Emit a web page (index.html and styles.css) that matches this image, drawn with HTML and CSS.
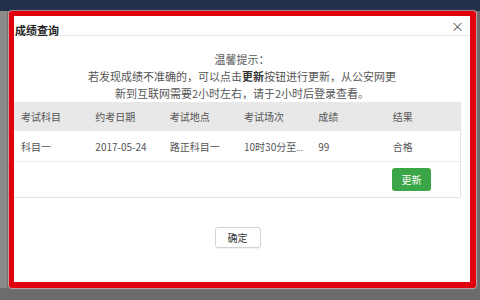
FILE: index.html
```html
<!DOCTYPE html>
<html lang="zh">
<head>
<meta charset="utf-8">
<link rel="stylesheet" href="styles.css">
</head>
<body>
<div class="topbar"></div>
<div class="stage">
  <div class="modal">
    <div class="modal-title">
      <span class="title-text">成绩查询</span>
      <span class="close">×</span>
    </div>
    <div class="notice">
      <p>温馨提示：</p>
      <p>若发现成绩不准确的，可以点击<b>更新</b>按钮进行更新，从公安网更</p>
      <p>新到互联网需要2小时左右，请于2小时后登录查看。</p>
    </div>
    <div class="panel">
      <table class="grid">
        <thead>
          <tr><th>考试科目</th><th>约考日期</th><th>考试地点</th><th>考试场次</th><th>成绩</th><th>结果</th></tr>
        </thead>
        <tbody>
          <tr><td>科目一</td><td>2017-05-24</td><td>路正科目一</td><td>10时30分至<span class="dots">...</span></td><td>99</td><td>合格</td></tr>
        </tbody>
      </table>
      <div class="actions"><button class="btn-update">更新</button></div>
    </div>
    <div class="footer"><button class="btn-ok">确定</button></div>
  </div>
</div>
</body>
</html>
```

FILE: styles.css
```css
html, body {
  margin: 0;
  padding: 0;
}
body {
  width: 480px;
  height: 300px;
  overflow: hidden;
  background: #6c6c6c;
  font-family: "Noto Sans CJK SC", "Noto Sans", sans-serif;
}
.topbar {
  height: 11px;
  background: #22304a;
}
.stage {
  padding: 0 4px 0 9px;
  background: linear-gradient(to right, #8a8a8a 0, #8a8a8a 7px, #6c6c6c 7px);
}
.modal {
  border-style: solid;
  border-color: #e1000d;
  border-width: 5px 6px 6px 5px;
  border-radius: 3px;
  background: #fff;
  height: 266px;
  box-shadow: 0 0 1px 1px rgba(255, 200, 200, 0.6);
}
.modal-title {
  display: flex;
  justify-content: space-between;
  align-items: flex-start;
  height: 19px;
  padding: 0 6px 0 1px;
  border-bottom: 1px solid #e6e6e6;
  font-size: 11px;
  font-weight: bold;
  color: #222;
}
.title-text {
  margin-top: 7px;
  line-height: 14px;
}
.close {
  margin-top: 3px;
  font-weight: normal;
  font-size: 13px;
  color: #555;
  line-height: 13px;
}
.notice {
  margin-top: 15px;
  text-align: center;
  font-size: 11px;
  line-height: 17px;
  color: #555;
}
.notice p {
  margin: 0;
}
.notice b {
  color: #333;
}
.panel {
  margin-right: 9px;
  border-right: 1px solid #e4e4e4;
  border-bottom: 1px solid #e4e4e4;
}
.grid {
  width: 100%;
  border-collapse: collapse;
  table-layout: fixed;
  font-size: 10px;
  color: #555;
}
.grid th, .grid td {
  text-align: left;
  font-weight: normal;
  padding: 0 4px 0 7px;
  white-space: nowrap;
}
.grid th {
  height: 29px;
  background: #e8e8e8;
}
.grid td {
  height: 30px;
  border-bottom: 1px solid #ececec;
}
.dots {
  font-size: 8px;
}
.actions {
  display: flex;
  justify-content: flex-end;
  align-items: center;
  height: 35px;
  padding-right: 29px;
}
.btn-update {
  width: 39px;
  height: 23px;
  border: none;
  border-radius: 3px;
  background: #3aa647;
  color: #fff;
  font-family: inherit;
  font-size: 10px;
  padding: 0;
}
.footer {
  display: flex;
  justify-content: center;
  padding-right: 9px;
  margin-top: 29px;
}
.btn-ok {
  width: 46px;
  height: 21px;
  border: 1px solid #d4d4d4;
  border-radius: 3px;
  background: #fff;
  color: #333;
  font-family: inherit;
  font-size: 10px;
  padding: 0;
  box-shadow: 0 1px 1px rgba(0, 0, 0, 0.06);
}
```
